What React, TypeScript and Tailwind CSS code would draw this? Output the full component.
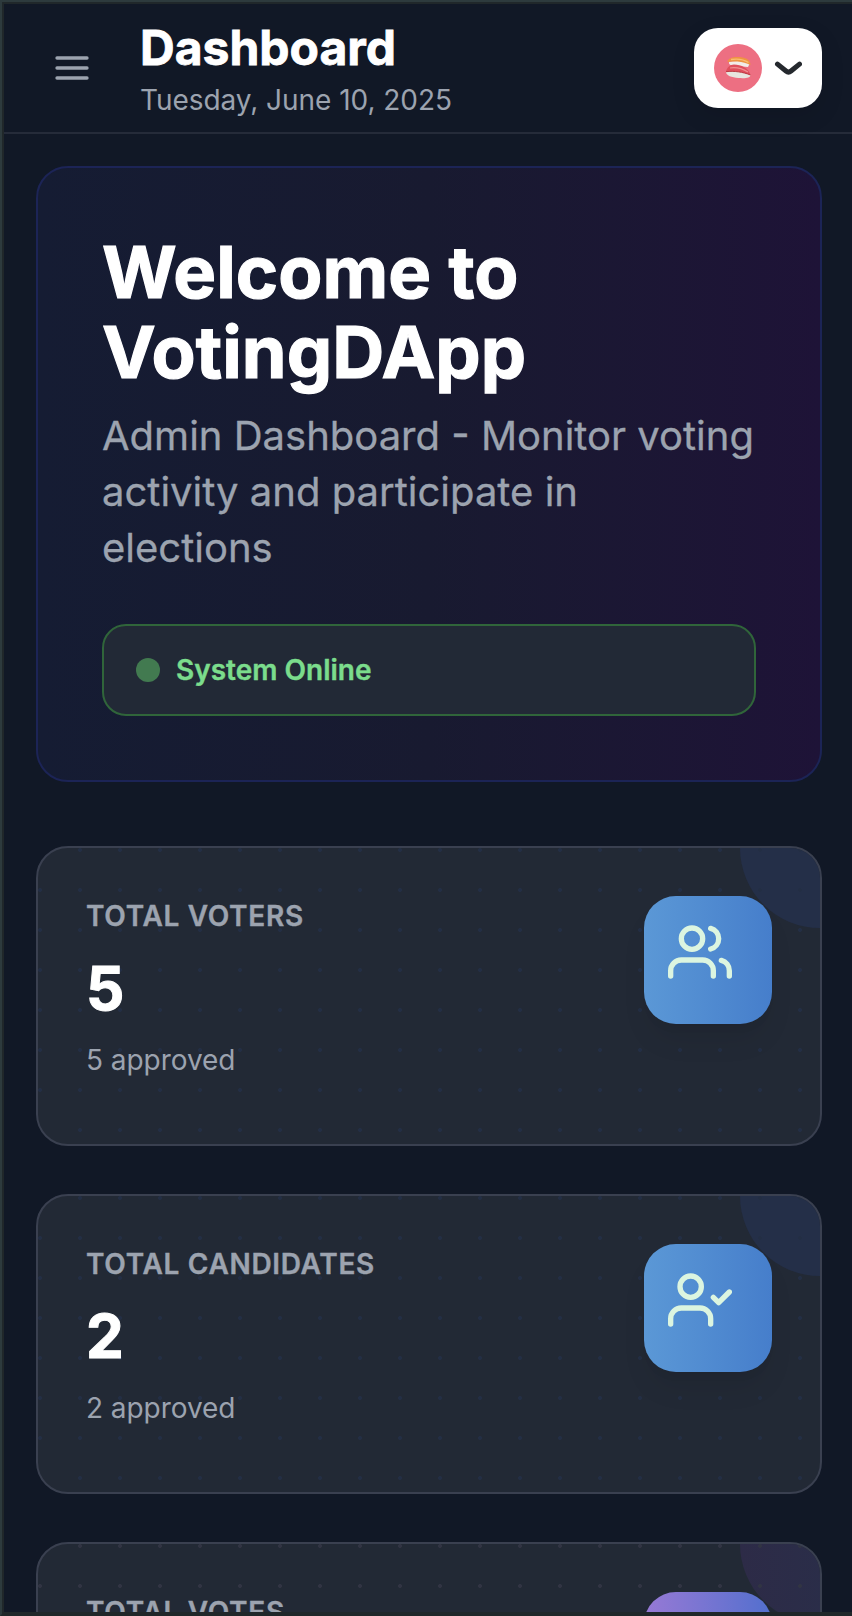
import { FiMenu, FiUserCheck, FiUsers, FiBarChart2 } from "react-icons/fi";
import type { IconType } from "react-icons";

type Stat = {
  label: string;
  value: string;
  note: string;
  Icon: IconType;
  tile: string;
  blob: string;
  dots: string;
};

const blueDots = "bg-[radial-gradient(circle_at_2px_2px,#232e44_1.7px,transparent_2.2px)]";
const greyDots = "bg-[radial-gradient(circle_at_2px_2px,#313443_1.7px,transparent_2.2px)]";

const stats: Stat[] = [
  {
    label: "Total Voters",
    value: "5",
    note: "5 approved",
    Icon: FiUsers,
    tile: "from-[#5b98d6] to-[#467ecb]",
    blob: "bg-[#242f48]",
    dots: blueDots,
  },
  {
    label: "Total Candidates",
    value: "2",
    note: "2 approved",
    Icon: FiUserCheck,
    tile: "from-[#5b98d6] to-[#467ecb]",
    blob: "bg-[#242f48]",
    dots: blueDots,
  },
  {
    label: "Total Votes",
    value: "4",
    note: "Votes cast",
    Icon: FiBarChart2,
    tile: "from-[#9779d5] to-[#516fce]",
    blob: "bg-linear-to-r from-[#2d2b47] to-[#272f4a]",
    dots: greyDots,
  },
];

function Sushi() {
  return (
    <svg viewBox="0 0 48 48" className="size-12">
      <path d="M15 19c0 2 3 3 8 3l11 1 2-4c-5-2-14-3-21-1z" fill="#f1ece8" />
      <path d="M13.5 18c0-3 4-5 10-5 7 0 13 2 13 8-4-2-8-3-13-3.500-4 0-7 0-10 .5z" fill="#ee9442" />
      <path d="M17 15.500c6-1 13 0 17.500 3" stroke="#f9bd72" strokeWidth="1.300" fill="none" />
      <path d="M12 28c5-3 20 0 24.500 3 0 3-5 3.500-12 3-7-.5-12.500-2.500-12.500-6z" fill="#e7e5df" />
      <path d="M12 27.500c1-4 4-7 8-7 7 0 15 4 16.500 10.500-7-2.500-15-4.500-24.500-3.500z" fill="#df4f5d" />
      <path d="M16 24c6-1 13 1 18 4" stroke="#f08f91" strokeWidth="1.200" fill="none" />
      <path d="M12 27.700c8-1 17 .3 24.500 3.300" stroke="#b62e37" strokeWidth="0.900" fill="none" />
    </svg>
  );
}

function Header() {
  return (
    <header className="flex h-[130px] shrink-0 items-center border-b-2 border-[#252b39] pr-[30px] pl-12">
      <button className="flex text-[#9ca3af]" aria-label="Menu">
        <FiMenu size={40} />
      </button>
      <div className="ml-12 flex-1">
        <h1 className="text-[48px] leading-16 font-bold text-white [-webkit-text-stroke:0.8px_white]">Dashboard</h1>
        <p className="text-[28px] leading-10 tracking-[-0.05px] text-[#9ca3af]">Tuesday, June 10, 2025</p>
      </div>
      <button className="flex h-20 w-32 items-center gap-3 rounded-[24px] bg-white pl-5 text-[#25292e] shadow-[0_8px_24px_rgba(0,0,0,0.1)]">
        <span className="flex size-12 rounded-full bg-[#ed6f82]">
          <Sushi />
        </span>
        <svg width="28" height="14" viewBox="0 0 14 7" fill="none">
          <path
            d="M12.75 1.54001L8.51647 5.0038C7.77974 5.60658 6.72026 5.60658 5.98352 5.0038L1.75 1.54001"
            stroke="currentColor"
            strokeWidth="2.5"
            strokeLinecap="round"
          />
        </svg>
      </button>
    </header>
  );
}

function Welcome() {
  return (
    <section className="rounded-[32px] border-2 border-[#1c2456] bg-linear-to-r from-[#151c33] via-[#181a30] to-[#1e1337] p-16">
      <h2 className="text-[72px] leading-20 font-bold tracking-[0.1px] text-white [-webkit-text-stroke:1.2px_white]">
        Welcome to VotingDApp
      </h2>
      <p className="mt-4 text-[40px] leading-14 text-[#9ca3af] [-webkit-text-stroke:0.3px_#9ca3af]">
        Admin Dashboard - Monitor voting activity and participate in elections
      </p>
      <div className="mt-12 flex items-center gap-4 rounded-[24px] border-2 border-[#30653a] bg-[#222936] px-8 py-6">
        <span className="size-6 rounded-full bg-[#427a50]" />
        <span className="text-[28px] leading-10 font-semibold text-[#7bdc8c] [-webkit-text-stroke:0.4px_#7bdc8c]">
          System Online
        </span>
      </div>
    </section>
  );
}

function StatCard({ label, value, note, Icon, tile, blob, dots }: Stat) {
  return (
    <article className="relative flex h-[300px] shrink-0 items-start justify-between overflow-hidden rounded-[32px] border-2 border-[#3a4050] bg-[#222935] p-12">
      <div className={`absolute -top-20 -right-20 size-40 rounded-full ${blob}`} />
      <div className={`absolute inset-0 bg-size-[40px_40px] ${dots}`} />
      <div className="relative">
        <h3 className="text-[28px] leading-10 font-semibold tracking-[0.025em] text-[#9ca3af] uppercase [-webkit-text-stroke:0.4px_#9ca3af]">
          {label}
        </h3>
        <p className="mt-4 text-[60px] leading-18 font-bold text-white [-webkit-text-stroke:1px_white]">{value}</p>
        <p className="mt-4 text-[28px] leading-10 tracking-[-0.05px] text-[#9ca3af]">{note}</p>
      </div>
      <div
        className={`relative size-32 rounded-[32px] bg-linear-to-r p-6 text-[#dcf5e0] shadow-[0_20px_30px_-6px_rgba(0,0,0,0.08),0_8px_12px_-8px_rgba(0,0,0,0.08)] ${tile}`}
      >
        <Icon size={64} />
      </div>
    </article>
  );
}

export default function App() {
  return (
    <div className="h-[1616px] w-[852px] overflow-hidden border-t-2 border-b-2 border-l-2 border-t-[#2d3a3d] border-b-[#1f2729] border-l-[#2d3a3d] font-['Inter',sans-serif]">
      <div className="flex h-full flex-col overflow-hidden border-t-2 border-b-2 border-l-2 border-[#20272a] bg-[#111826]">
        <Header />
        <main className="flex flex-col pt-8 pr-[30px] pl-8">
          <Welcome />
          <div className="mt-16 flex flex-col gap-12">
            {stats.map((stat) => (
              <StatCard key={stat.label} {...stat} />
            ))}
          </div>
        </main>
      </div>
    </div>
  );
}
